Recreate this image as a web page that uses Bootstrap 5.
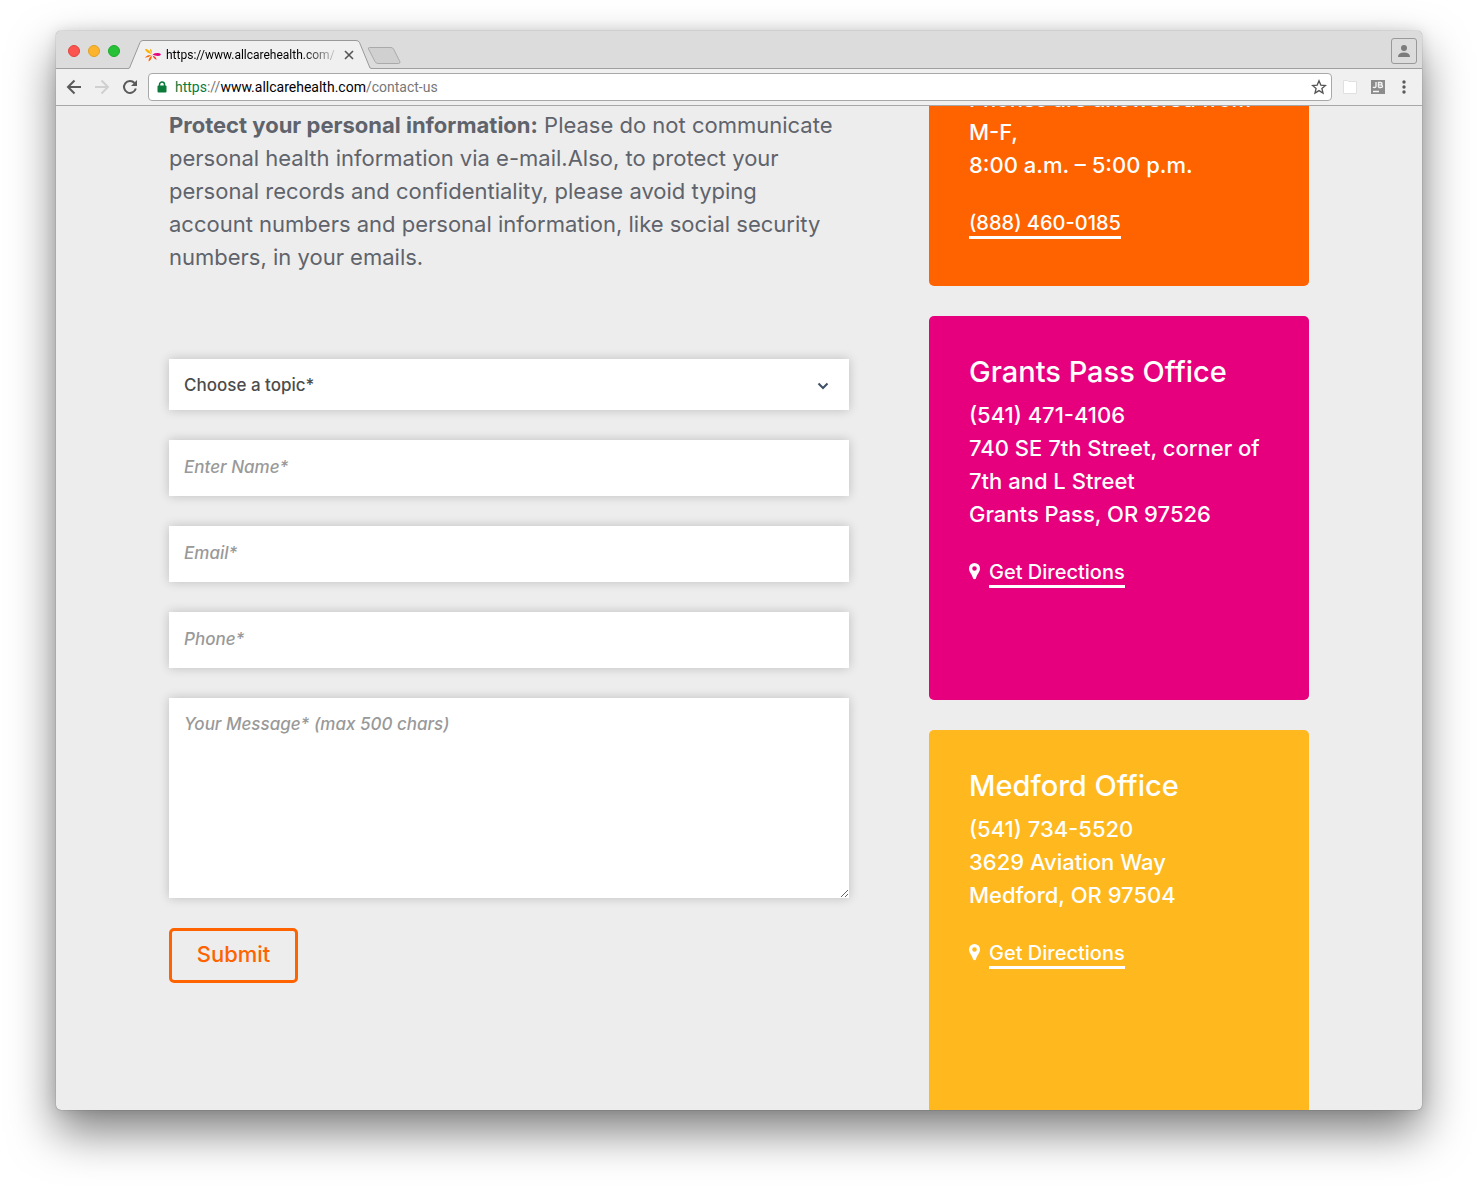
<!DOCTYPE html>
<html lang="en">
<head>
<meta charset="utf-8">
<meta name="viewport" content="width=device-width, initial-scale=1">
<title>Contact us</title>
<link href="https://cdn.jsdelivr.net/npm/bootstrap@5.3.0/dist/css/bootstrap.min.css" rel="stylesheet">
<style>
body { background: #fff; padding: 31px 56px 80px; font-family: Inter, "Open Sans", sans-serif; }
.window { height: calc(100vh - 111px); border-radius: 5px; background: #ededed;
  box-shadow: 0 0 1px rgba(0,0,0,.6), 0 22px 46px rgba(0,0,0,.5), 0 0 14px rgba(0,0,0,.12); }

/* browser frame */
.tabstrip { height: 38px; background: #dcdcdc; border-bottom: 1px solid #a0a0a0; padding: 0 5px 0 12px; font-family: Roboto, sans-serif; }
.light { width: 12px; height: 12px; border-radius: 50%; border: 1px solid; }
.light-close { background: #fc5550; border-color: #e0443e; }
.light-min { background: #fdb42d; border-color: #dea123; }
.light-max { background: #27c138; border-color: #1aab29; }
.lights { height: 35px; }
.tab { width: 244px; height: 29px; margin: 0 -5px -1px 8px; padding: 0 18px 0 16px; font-size: 12px; color: #000; }
.tab-shape { position: absolute; inset: 0; width: 100%; height: 100%; }
.tab-title { margin-left: 5px; mask-image: linear-gradient(90deg, #000 78%, transparent 101%); -webkit-mask-image: linear-gradient(90deg, #000 78%, transparent 101%); }
.plain { background: none; border: 0; padding: 0; display: flex; }
.new-tab { margin-bottom: 3px; }
.profile { width: 26px; height: 26px; border: 1px solid #999; border-radius: 3px; align-items: flex-end; justify-content: center; padding-bottom: 6px; }
.toolbar { height: 37px; background: #f0f0f0; border-bottom: 1px solid #a8a6a8; padding: 0 12px 0 10px; }
.nav-buttons { gap: 12px; margin-right: 10px; }
.extensions { gap: 12px; margin-left: 8px; }
.address { height: 28px; border: 1px solid #a8a8a8; border-radius: 4px; background: #fff; padding: 0 4px 0 8px; font: 14px/26px Roboto, sans-serif; color: #777; }
.address .host { color: #000; }
.address .scheme { color: #0b7a3b; }

/* page */
.site { max-width: 1140px; padding-top: 3px; }
.main-col { padding-right: 80px; }
.copy { font-size: 22px; line-height: 33px; color: #5f636b; padding-right: 10px; margin-bottom: 85px; }
.stack { display: grid; gap: 30px; }
.field { display: block; width: 100%; height: 56px; padding: 0 15px 2px; border: 0; border-radius: 0; background: #fff;
  color: #4c4c4c; font-size: 17px; font-weight: 500; box-shadow: 0 0 10px rgba(0,0,0,.2); }
.field::placeholder { color: #999; font-style: italic; }
.field-select { height: 51px; appearance: none; -webkit-appearance: none; padding-top: 4px; }
.field-area { height: 200px; padding: 14px 15px; }
.chevron { position: absolute; right: 20px; top: 23px; pointer-events: none; }
.send { justify-self: start; width: 129px; height: 55px; border: 3px solid #ff6300; border-radius: 5px; color: #ff6300; background: transparent; font-size: 22px; font-weight: 500; padding: 0 0 2px; }
.office { border-radius: 5px; padding: 40px; color: #fff; min-height: 384px; font-size: 22px; font-weight: 500; line-height: 33px; margin-bottom: 30px; }
.office h2 { font-size: 29px; line-height: 31px; font-weight: 500; margin-bottom: 12px; }
.office address { margin-bottom: 28px; line-height: 33px; }
.office a { color: #fff; font-size: 20px; line-height: 26px; text-decoration: none; border-bottom: 3px solid #fff; }
.office-phone { background: #ff6300; min-height: 0; margin-top: -26px; padding-top: 0; padding-bottom: 47px; }
.office-grants { background: #e6007e; }
.office-medford { background: #ffb81e; }
</style>
</head>
<body>
<div class="window d-flex flex-column overflow-hidden">
  <div class="tabstrip d-flex align-items-end flex-shrink-0">
    <div class="lights d-flex gap-2 align-items-center">
      <span class="light light-close"></span><span class="light light-min"></span><span class="light light-max"></span>
    </div>
    <div class="tab position-relative d-flex align-items-center">
      <svg class="tab-shape" viewBox="0 0 244 29" preserveAspectRatio="none"><path d="M0 28.5 1.5 28 12 2.500Q12.800.5 15 .5H228Q230.500.5 231.500 2.500L242 28l2 .5V29H0z" fill="#f0f0f0"/><path d="M0 28.500 1.500 28 12 2.500Q12.800.5 15 .5H228Q230.500.5 231.500 2.500L242 28l2 .5" fill="none" stroke="#999"/></svg>
      <svg class="position-relative flex-shrink-0" width="17" height="14" viewBox="0 0 17 14"><path d="M7.500 6Q3.500 5.500.8 1.500 1.500.8 2.500 1 6 2.500 7.500 6z" fill="#ffb000"/><path d="M7.800 5.500Q5.200 2.500 6.500.8 8.300 2 7.800 5.500z" fill="#ffb000"/><path d="M8.500 6.500Q11 4.800 15.500 5.200 16.800 5.500 16.800 6.500T15.500 7.800Q11 8.200 8.500 6.500z" fill="#e6007e"/><path d="M7.500 6.800Q3 7 .8 9.500 4.500 10 7.500 6.800z" fill="#ff6300"/><path d="M7.800 7.500Q4.500 9.500 4.500 13.500 8 11.500 7.800 7.500z" fill="#ff6300"/><path d="M8.500 7.500q1 3.500 4 4.500 0-3.500-4-4.500z" fill="#f03c28"/></svg>
      <span class="tab-title position-relative flex-fill text-nowrap overflow-hidden">https://www.allcarehealth.com/</span>
      <button class="plain position-relative ms-1" type="button" aria-label="Close tab"><svg width="10" height="10" viewBox="0 0 10 10"><path d="m1 1 8 8m0-8-8 8" stroke="#555" stroke-width="1.600"/></svg></button>
    </div>
    <button class="plain new-tab" type="button" aria-label="New tab"><svg width="34" height="18" viewBox="0 0 34 18"><path d="M2.500.5H24q2 0 2.800 2l6 12q.7 2-1.300 2H11q-2 0-3-2L1.500 2q-.7-1.500 1-1.500z" fill="#d0d0d0" stroke="#aaa"/></svg></button>
    <button class="plain profile ms-auto mb-1" type="button" aria-label="Profile"><svg width="12" height="12" viewBox="0 0 12 12"><circle cx="6" cy="3" r="3" fill="#7c7c7c"/><path d="M0 12q0-4.500 6-4.500t6 4.500z" fill="#7c7c7c"/></svg></button>
  </div>
  <div class="toolbar d-flex align-items-center flex-shrink-0">
    <div class="nav-buttons d-flex">
      <button class="plain" type="button" aria-label="Back"><svg width="16" height="16" viewBox="0 0 16 16"><path d="M15 8H2m6.500-6.500L2 8l6.500 6.500" fill="none" stroke="#5a5a5a" stroke-width="2"/></svg></button>
      <button class="plain" type="button" aria-label="Forward"><svg width="16" height="16" viewBox="0 0 16 16"><path d="M1 8h13M7.500 1.500 14 8l-6.500 6.500" fill="none" stroke="#d0d0d0" stroke-width="2"/></svg></button>
      <button class="plain" type="button" aria-label="Reload"><svg width="16" height="16" viewBox="0 0 16 16"><path d="M13.800 9.500A6 6 0 1 1 12.500 4" fill="none" stroke="#5a5a5a" stroke-width="2"/><path d="M15 1v6H9z" fill="#5a5a5a"/></svg></button>
    </div>
    <div class="address d-flex align-items-center flex-fill">
      <svg class="me-2" width="10" height="12" viewBox="0 0 10 12"><rect y="4.500" x=".5" width="9" height="7" rx="1" fill="#0b7a3b"/><path d="M2.500 5V3.500a2.500 2.500 0 0 1 5 0V5" fill="none" stroke="#0b7a3b" stroke-width="1.500"/></svg>
      <div class="flex-fill"><span class="scheme">https</span>://<span class="host">www.allcarehealth.com</span>/contact-us</div>
      <button class="plain" type="button" aria-label="Bookmark"><svg width="16" height="16" viewBox="0 0 16 16"><path d="m8 1.800 1.800 4.300 4.700.4-3.600 3 1.100 4.600L8 11.600l-4 2.500 1.100-4.600-3.600-3 4.700-.4z" fill="none" stroke="#555" stroke-width="1.300"/></svg></button>
    </div>
    <div class="extensions d-flex">
      <svg width="18" height="16" viewBox="0 0 18 16"><path d="M3.500 1.500h4l1 1h8v12h-13z" fill="#fff" stroke="#e0e0e0"/></svg>
      <svg width="16" height="16" viewBox="0 0 16 16"><rect x="1" y="1" width="14" height="14" fill="#8c8c8c"/><path d="M3 12.500h6M6 3v4.200Q6 8.500 4.500 8.500 3.500 8.500 3 7.800M8.500 8.500v-5h2q1.500 0 1.500 1.200T10.500 5.900h-2M10.500 5.900q2 0 2 1.300t-2 1.300h-2" fill="none" stroke="#f4f4f4" stroke-width="1.400"/></svg>
      <button class="plain" type="button" aria-label="Menu"><svg width="12" height="16" viewBox="0 0 12 16" fill="#5a5a5a"><circle cx="6" cy="3" r="1.700"/><circle cx="6" cy="8" r="1.700"/><circle cx="6" cy="13" r="1.700"/></svg></button>
    </div>
  </div>

  <div class="flex-fill overflow-hidden">
    <div class="site mx-auto">
      <div class="row g-0">
        <main class="col-8 main-col">
          <p class="copy"><strong>Protect your personal information:</strong> Please do not communicate personal health information via e-mail.Also, to protect your personal records and confidentiality, please avoid typing account numbers and personal information, like social security numbers, in your emails.</p>
          <form class="stack">
            <div class="position-relative">
              <select class="field field-select" aria-label="Topic"><option>Choose a topic*</option></select>
              <svg class="chevron" width="12" height="8" viewBox="0 0 12 8"><path d="m1.500 1.500 4.500 4.500 4.500-4.500" fill="none" stroke="#3c5165" stroke-width="2"/></svg>
            </div>
            <input class="field" type="text" aria-label="Name" placeholder="Enter Name*">
            <input class="field" type="email" aria-label="Email" placeholder="Email*">
            <input class="field" type="tel" aria-label="Phone" placeholder="Phone*">
            <textarea class="field field-area" aria-label="Message" placeholder="Your Message* (max 500 chars)"></textarea>
            <button class="send" type="submit">Submit</button>
          </form>
        </main>
        <aside class="col-4">
          <section class="office office-phone">
            <address>Phones are answered from M-F,<br>8:00 a.m. – 5:00 p.m.</address>
            <div class="d-flex align-items-start"><a href="#">(888) 460-0185</a></div>
          </section>
          <section class="office office-grants">
            <h2>Grants Pass Office</h2>
            <address>(541) 471-4106<br>740 SE 7th Street, corner of 7th and L Street<br>Grants Pass, OR 97526</address>
            <div class="d-flex align-items-start gap-2">
              <svg class="mt-1" width="12" height="17" viewBox="0 0 12 17"><path d="M5.500 0A5.500 5.500 0 0 0 0 5.500C0 9 3 11 4.100 15.500q1.400 1.500 2.800 0C8 11 11 9 11 5.500A5.500 5.500 0 0 0 5.500 0zm0 3.200a2.300 2.300 0 1 1 0 4.600 2.300 2.300 0 0 1 0-4.600z" fill="#fff"/></svg>
              <a href="#">Get Directions</a>
            </div>
          </section>
          <section class="office office-medford mb-0">
            <h2>Medford Office</h2>
            <address>(541) 734-5520<br>3629 Aviation Way<br>Medford, OR 97504</address>
            <div class="d-flex align-items-start gap-2">
              <svg class="mt-1" width="12" height="17" viewBox="0 0 12 17"><path d="M5.500 0A5.500 5.500 0 0 0 0 5.500C0 9 3 11 4.100 15.500q1.400 1.500 2.800 0C8 11 11 9 11 5.500A5.500 5.500 0 0 0 5.500 0zm0 3.200a2.300 2.300 0 1 1 0 4.600 2.300 2.300 0 0 1 0-4.600z" fill="#fff"/></svg>
              <a href="#">Get Directions</a>
            </div>
          </section>
        </aside>
      </div>
    </div>
  </div>
</div>
<script src="https://cdn.jsdelivr.net/npm/bootstrap@5.3.0/dist/js/bootstrap.bundle.min.js"></script>
</body>
</html>
